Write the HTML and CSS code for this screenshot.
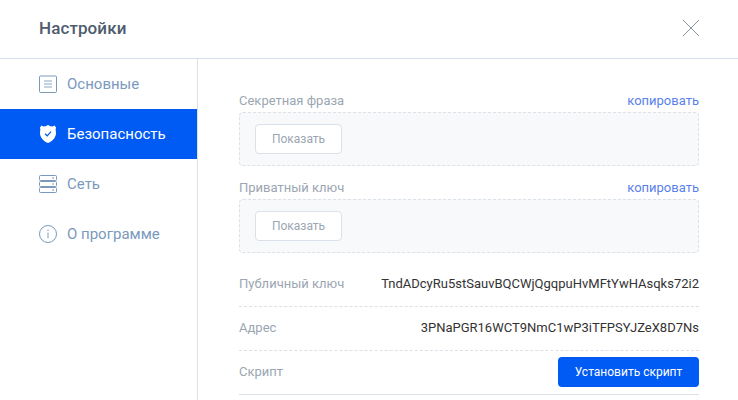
FILE: index.html
```html
<!DOCTYPE html>
<html lang="ru">
<head>
<meta charset="utf-8">
<title>Настройки</title>
<link rel="stylesheet" href="styles.css">
</head>
<body>
<header class="header">
  <h1 class="title">Настройки</h1>
  <svg class="close" width="16" height="16" viewBox="0 0 16 16"><path d="M0 0L16 16M16 0L0 16"/></svg>
</header>
<div class="layout">
  <nav class="sidebar">
    <a class="item">
      <svg class="icon" width="18" height="18" viewBox="0 0 18 18"><rect x=".5" y="1" width="17" height="16.500" rx="1"/><path class="lines" d="M5 6h8M5 9h8M5 12h8"/></svg>
      <span class="item-text">Основные</span>
    </a>
    <a class="item active">
      <svg class="icon shield" width="18" height="18" viewBox="0 0 18 18"><path class="fill" d="M9 0C7 1.500 4.500 2 2.500 .6L1 2.500C1.500 4 1.300 5.500 1 7.500C.8 12 4 16.300 9 18C14 16.300 17.200 12 17 7.500C16.700 5.500 16.500 4 17 2.500L15.500 .6C13.500 2 11 1.500 9 0Z"/><path class="check" d="M6 8.800L8.200 10.800L12 6.600"/></svg>
      <span class="item-text">Безопасность</span>
    </a>
    <a class="item">
      <svg class="icon" width="18" height="18" viewBox="0 0 18 18"><rect x=".5" y=".5" width="17" height="5" rx="1"/><rect x=".5" y="6.500" width="17" height="5" rx="1"/><rect x=".5" y="12.500" width="17" height="5" rx="1"/><path class="dots" d="M13 3h2M13 9h2M13 15h2"/></svg>
      <span class="item-text">Сеть</span>
    </a>
    <a class="item">
      <svg class="icon" width="18" height="18" viewBox="0 0 18 18"><circle cx="9" cy="9" r="8.500"/><path d="M9 7.500v5.500M9 4.500v1.500"/></svg>
      <span class="item-text">О программе</span>
    </a>
  </nav>
  <main class="content">
    <section class="secret">
      <div class="caption"><span class="label">Секретная фраза</span><a class="copy">копировать</a></div>
      <div class="box"><button class="btn show">Показать</button></div>
    </section>
    <section class="secret">
      <div class="caption"><span class="label">Приватный ключ</span><a class="copy">копировать</a></div>
      <div class="box"><button class="btn show">Показать</button></div>
    </section>
    <div class="rows">
      <div class="row"><span class="label">Публичный ключ</span><span class="value">TndADcyRu5stSauvBQCWjQgqpuHvMFtYwHAsqks72i2</span></div>
      <div class="row"><span class="label">Адрес</span><span class="value">3PNaPGR16WCT9NmC1wP3iTFPSYJZeX8D7Ns</span></div>
      <div class="row last"><span class="label">Скрипт</span><button class="btn primary">Установить скрипт</button></div>
    </div>
  </main>
</div>
</body>
</html>
```
FILE: styles.css
```css
* { box-sizing: border-box; }
body { margin: 0; height: 400px; overflow: hidden; background: #fff; font-family: Roboto, sans-serif; font-size: 13px; line-height: 18px; }
.header { height: 59px; padding: 0 39px 2px; display: flex; align-items: center; justify-content: space-between; border-bottom: 1px solid #d3dfea; }
.title { margin: 0; font-size: 17px; line-height: 20px; font-weight: 500; color: #4e5c6e; letter-spacing: .1px; }
.close { display: block; overflow: visible; fill: none; stroke: #8792a3; stroke-width: 1; }
.layout { display: flex; height: 341px; }
.sidebar { width: 198px; border-right: 1px solid #dae1e9; }
.item { display: flex; align-items: center; gap: 10px; height: 50px; padding-left: 39px; color: #7b99bd; font-size: 15px; }
.item.active { background: #005af4; color: #fff; }
.icon { fill: none; stroke: #7b99bd; stroke-width: 1; }
.lines { stroke-width: 1.2; stroke-opacity: .85; }
.shield .fill { fill: #fff; stroke: none; }
.shield .check { stroke: #005af4; stroke-width: 1.2; }
.content { width: 501px; padding: 33px 0 0 41px; }
.secret { height: 87px; }
.caption { display: flex; justify-content: space-between; height: 20px; }
.label { color: #9ba6b2; }
.copy { color: #5a81ea; }
.box { height: 54px; padding: 11px 15px; border: 1px dashed #dae1e9; border-radius: 4px; background: #f8f9fb; }
.btn { display: block; height: 30px; padding: 0; border-radius: 4px; font-family: Roboto, sans-serif; font-size: 12px; line-height: 28px; }
.show { width: 87px; border: 1px solid #dae1e9; background: #fff; color: #9ba6b2; }
.rows { margin-top: -3px; }
.row { display: flex; align-items: center; justify-content: space-between; height: 44px; padding-bottom: 1px; border-bottom: 1px dashed #dae1e9; }
.row.last { border-bottom: 1px solid #dae1e9; }
.value { color: #333; }
.primary { width: 141px; border: 0; background: #005af4; color: #fff; line-height: 30px; }
```
